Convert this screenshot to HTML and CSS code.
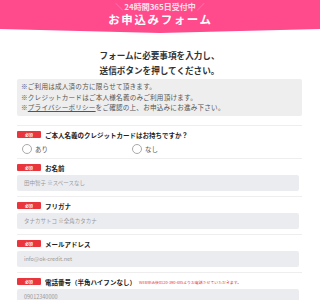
FILE: index.html
```html
<!DOCTYPE html>
<html lang="ja">
<head>
<meta charset="utf-8">
<link rel="stylesheet" href="styles.css">
</head>
<body>
<header class="banner">
  <div class="banner-sub"><span class="slash">＼</span>24時間365日受付中<span class="slash">／</span></div>
  <div class="banner-title">お申込みフォーム</div>
</header>
<main class="wrap">
  <p class="lead">フォームに必要事項を入力し、<br>送信ボタンを押してください。</p>
  <div class="notes">
    <p>※ご利用は成人済の方に限らせて頂きます。</p>
    <p>※クレジットカードはご本人様名義のみご利用頂けます。</p>
    <p>※<a class="link">プライバシーポリシー</a>をご確認の上、お申込みにお進み下さい。</p>
  </div>
  <section class="field">
    <div class="label-row"><span class="req">必須</span><span class="label">ご本人名義のクレジットカードはお持ちですか？</span></div>
    <div class="radios">
      <label class="radio"><span class="circle"></span>あり</label>
      <label class="radio"><span class="circle"></span>なし</label>
    </div>
  </section>
  <section class="field">
    <div class="label-row"><span class="req">必須</span><span class="label">お名前</span></div>
    <div class="input">田中智子 ※スペースなし</div>
  </section>
  <section class="field">
    <div class="label-row"><span class="req">必須</span><span class="label">フリガナ</span></div>
    <div class="input">タナカサトコ ※全角カタカナ</div>
  </section>
  <section class="field">
    <div class="label-row"><span class="req">必須</span><span class="label">メールアドレス</span></div>
    <div class="input">info@ok-credit.net</div>
  </section>
  <section class="field">
    <div class="label-row"><span class="req">必須</span><span class="label">電話番号（半角ハイフンなし）</span><span class="note-red">WEB申込後0120-390-485よりお電話させていただきます。</span></div>
    <div class="input">09012340000</div>
  </section>
</main>
</body>
</html>
```
FILE: styles.css
```css
html, body {
  margin: 0;
  padding: 0;
  background: #fff;
  font-family: "Noto Sans CJK JP", "Noto Sans", sans-serif;
  color: #333;
}
p { margin: 0; }

.banner {
  background: #ff4a8c;
  height: 33px;
  clip-path: polygon(0 0, 100% 0, 100% 29px, 50% 33px, 0 29px);
  text-align: center;
  color: #fff;
}
.banner-sub {
  padding-top: 2px;
  font-size: 8px;
  line-height: 10px;
  font-weight: 700;
  color: #ffe0eb;
}
.slash {
  color: #ff9cc0;
  font-weight: 400;
  margin: 0 1px;
}
.banner-title {
  font-size: 11.5px;
  line-height: 14px;
  font-weight: 700;
  letter-spacing: 1.6px;
  padding-left: 1px;
}

.wrap {
  margin: 0 18px 0 17px;
}
.lead {
  margin-top: 15px;
  text-align: center;
  font-size: 8.6px;
  line-height: 15px;
  font-weight: 700;
  color: #333;
}
.notes {
  margin-top: 1px;
  background: #eeeeee;
  border-radius: 2px;
  padding: 2px 4px 3px;
  font-size: 6.6px;
  line-height: 10.6px;
  color: #555;
  letter-spacing: 0.2px;
}
.link {
  text-decoration: underline;
  color: #555;
}

.field {
  border-top: 1px solid #eeeeee;
  padding: 5px 0 5px;
}
.notes + .field {
  margin-top: 9px;
}
.label-row {
  display: flex;
  align-items: center;
  height: 8px;
  white-space: nowrap;
}
.req {
  display: inline-flex;
  align-items: center;
  justify-content: center;
  width: 24px;
  height: 7px;
  background: #e8363c;
  color: #fff;
  font-size: 4px;
  font-weight: 700;
  border-radius: 1px;
  margin-right: 4px;
  flex: none;
}
.label {
  font-size: 6.5px;
  font-weight: 700;
  color: #222;
}
.note-red {
  font-size: 3.9px;
  color: #e8363c;
  margin-left: 3px;
}
.radios {
  display: grid;
  grid-template-columns: 110px 1fr;
  padding-left: 5px;
  margin-top: 5px;
  height: 9px;
}
.radio {
  display: flex;
  align-items: center;
  font-size: 6.5px;
  color: #555;
}
.circle {
  width: 8px;
  height: 8px;
  border: 1px solid #aaa;
  border-radius: 50%;
  background: #fff;
  margin-right: 3px;
}
.input {
  margin-top: 3px;
  margin-right: 3px;
  height: 16px;
  background: #ebecef;
  border-radius: 2px;
  padding-left: 7px;
  display: flex;
  align-items: center;
  font-size: 5.5px;
  color: #999;
}
```
